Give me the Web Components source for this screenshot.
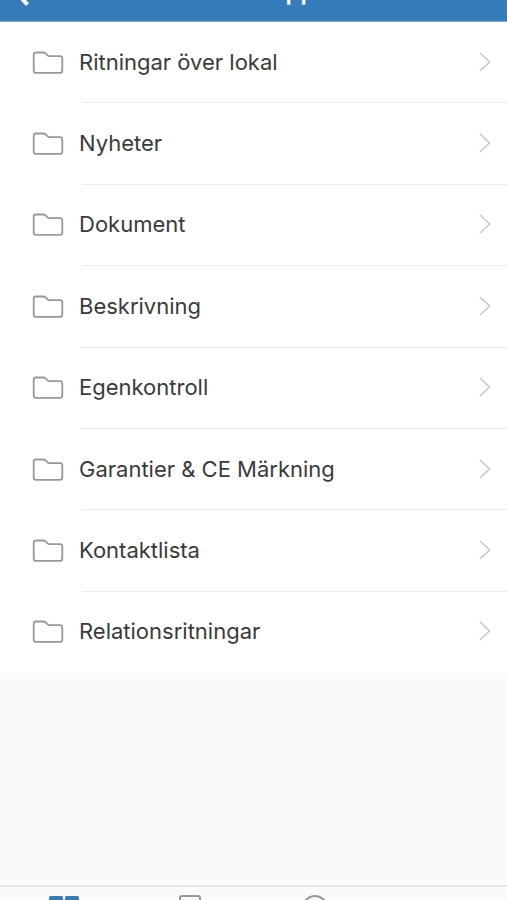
<!DOCTYPE html>
<html lang="sv">
<head>
<meta charset="utf-8">
<meta name="viewport" content="width=device-width, initial-scale=1">
<title>Mappar</title>
<style>
html, body { margin: 0; height: 100%; }
body { font-family: Inter, "Liberation Sans", sans-serif; color: #3a3a3b; background: #fafafa; overflow: hidden; }
</style>
</head>
<body>
<folder-app></folder-app>
<script>
const define = (name, html) => customElements.define(name, class extends HTMLElement {
  constructor() {
    super();
    this.attachShadow({ mode: "open" }).innerHTML = html;
  }
});

define("nav-bar", `
<style>
:host { display: grid; grid-template-columns: 1fr auto 1fr; align-content: end; align-items: end; height: 21px; overflow: hidden; background: #367cba; border-bottom: 1px solid #7faad0; color: #fff; }
button { justify-self: start; border: 0; padding: 0 0 15px 14px; background: none; color: inherit; }
svg { display: block; }
h1 { margin: 0; padding: 0 0 15px 94px; font-size: 24px; line-height: 28px; font-weight: 600; }
</style>
<button aria-label="Tillbaka"><svg width="18" height="26" viewBox="0 0 18 26" fill="none" stroke="currentColor" stroke-width="4"><path d="M13 0L2 12.500L13.500 24.500"/></svg></button>
<h1><slot></slot></h1>`);

define("folder-list", `
<style>
:host { display: block; background: #fff; }
nav { display: grid; grid-auto-rows: 1fr; min-height: 651px; }
</style>
<nav aria-label="Mappar"><slot></slot></nav>`);

define("folder-row", `
<style>
:host { display: grid; }
a { display: flex; align-items: stretch; color: inherit; text-decoration: none; font-size: 22px; line-height: 28px; padding-left: 32px; }
.folder { flex: none; align-self: center; margin-right: 15px; }
.body { flex: 1; display: flex; align-items: center; justify-content: space-between; padding: 0 16px 2px 0; background: linear-gradient(#ececec, #ececec) 3px 100% / 100% 1px no-repeat; }
:host(:last-child) .body { background: none; }
</style>
<a href="#">
<svg class="folder" width="32" height="24" viewBox="0 0 32 24" fill="none" stroke="#98989a" stroke-width="1.800" stroke-linejoin="round"><path d="M4 1.500H11.500Q12.800 1.500 13.600 2.300L15.600 4.400Q16.300 5.200 17.500 5.200H28Q30.300 5.200 30.300 7.500V19.500Q30.300 21.800 28 21.800H4Q1.700 21.800 1.700 19.500V3.800Q1.700 1.500 4 1.500Z"/></svg>
<span class="body"><slot></slot>
<svg width="12" height="20" viewBox="0 0 12 20" fill="none" stroke="#c8c8cb" stroke-width="1.600"><path d="M1 1L10.500 10L1 19"/></svg></span>
</a>`);

define("tab-bar", `
<style>
:host { display: block; height: 13px; overflow: hidden; border-top: 2px solid #e6e6e6; background: #fafafa; }
nav { display: grid; grid-template-columns: repeat(4, 1fr); }
button { border: 0; padding: 8px 0 0; background: none; display: flex; justify-content: center; }
</style>
<nav aria-label="Flikar">
<button aria-label="Mappar"><svg width="30" height="30" viewBox="-1 0 30 30" fill="#3779b9" overflow="visible"><rect y="1" width="14" height="13" rx="1.500"/><rect x="16" y="1" width="14" height="13" rx="1.500"/><rect y="16" width="14" height="13" rx="1.500"/><rect x="16" y="16" width="14" height="13" rx="1.500"/></svg></button>
<button aria-label="Dokument"><svg width="24" height="30" viewBox="0 0 24 30" fill="none" stroke="#98989a" stroke-width="2"><rect x="2" y="1" width="20" height="26" rx="2"/></svg></button>
<button aria-label="Profil"><svg width="28" height="30" viewBox="0 0 28 30" fill="none" stroke="#98989a" stroke-width="2"><circle cx="12" cy="13" r="12"/></svg></button>
<span></span>
</nav>`);

define("folder-app", `
<style>
:host { display: flex; flex-direction: column; min-height: 100vh; }
main { flex: 1; }
</style>
<nav-bar>pp</nav-bar>
<main><folder-list>
<folder-row>Ritningar över lokal</folder-row>
<folder-row>Nyheter</folder-row>
<folder-row>Dokument</folder-row>
<folder-row>Beskrivning</folder-row>
<folder-row>Egenkontroll</folder-row>
<folder-row>Garantier &amp; CE Märkning</folder-row>
<folder-row>Kontaktlista</folder-row>
<folder-row>Relationsritningar</folder-row>
</folder-list></main>
<tab-bar></tab-bar>`);
</script>
</body>
</html>
